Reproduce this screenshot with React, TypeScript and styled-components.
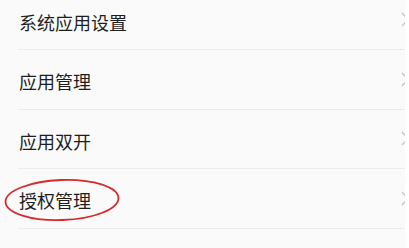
import styled, { createGlobalStyle } from 'styled-components';

const GlobalStyle = createGlobalStyle`
  html, body {
    margin: 0;
    padding: 0;
    background: #ffffff;
    overflow: hidden;
  }
`;

const Screen = styled.div`
  width: 405px;
  height: 248px;
  overflow: hidden;
  background: #fafafa;
  font-family: "Noto Sans CJK SC", "Noto Sans", sans-serif;
`;

const List = styled.ul`
  list-style: none;
  margin: -9.5px 0 0 18px;
  padding: 0;
`;

const Row = styled.li`
  position: relative;
  box-sizing: border-box;
  height: 59.5px;
  padding-top: 4px;
  display: flex;
  align-items: center;
  justify-content: space-between;
  border-bottom: 1px solid #ececec;
`;

const Label = styled.span`
  margin-left: 1px;
  font-size: 18px;
  color: #1e1e1e;
  letter-spacing: 0;
`;

const Chevron = styled.svg`
  flex: none;
  width: 8px;
  height: 15px;
  margin-right: -4px;
  margin-top: -4px;
`;

// red hand-drawn marker round one row
const Circle = styled.svg`
  position: absolute;
  left: -13px;
  top: 10px;
  width: 120px;
  height: 48px;
  overflow: visible;
  pointer-events: none;
`;

const items = ['系统应用设置', '应用管理', '应用双开', '授权管理'];

export default function App() {
  return (
    <Screen>
      <GlobalStyle />
      <List>
        {items.map((name) => (
          <Row key={name}>
            <Label>{name}</Label>
            <Chevron viewBox="0 0 8 15">
              <polyline points="1,1 7,7.5 1,14" fill="none" stroke="#c4c4c4" strokeWidth="1.2" />
            </Chevron>
            {name === '授权管理' && (
              <Circle viewBox="0 0 120 48">
                <ellipse cx="57" cy="21" rx="56.5" ry="20" fill="none" stroke="#d42a2c" strokeWidth="1.8" transform="rotate(-2 57 21)" />
              </Circle>
            )}
          </Row>
        ))}
      </List>
    </Screen>
  );
}
